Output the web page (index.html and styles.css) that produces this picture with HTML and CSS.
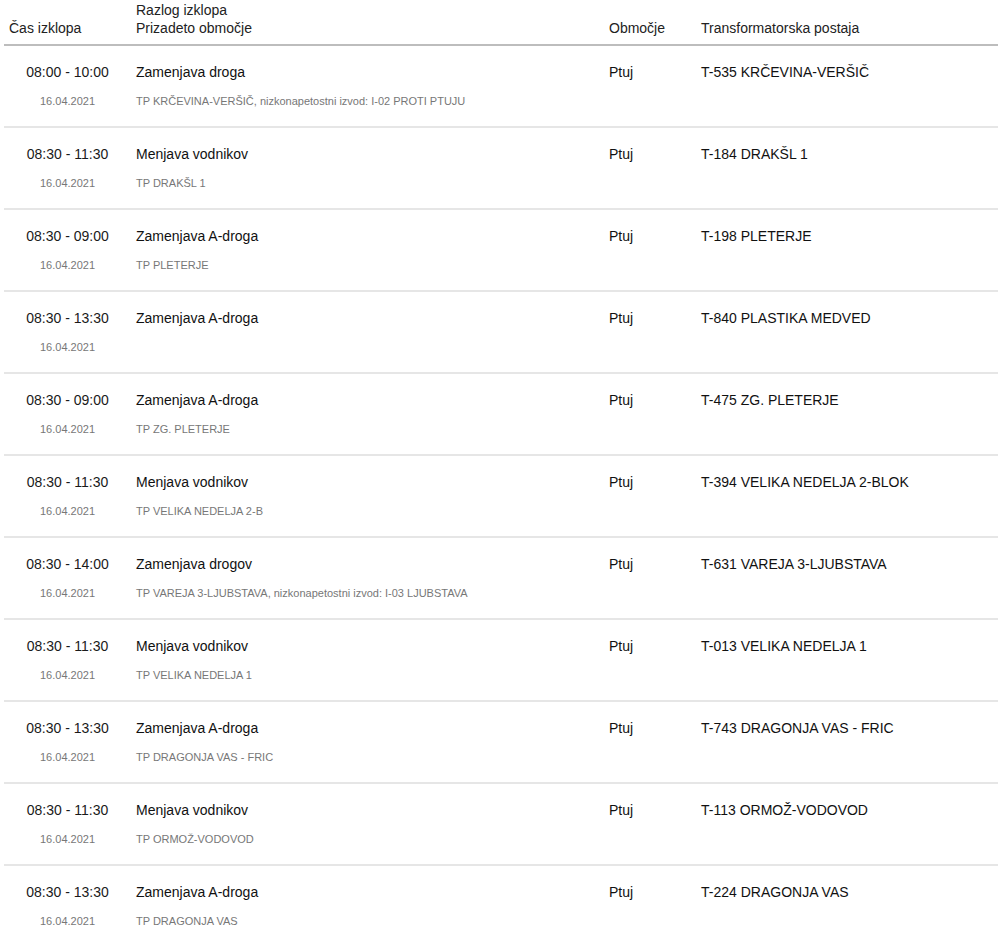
FILE: index.html
```html
<!DOCTYPE html>
<html lang="sl">
<head>
<meta charset="utf-8">
<title>Izklopi</title>
<link rel="stylesheet" href="styles.css">
</head>
<body>
<table class="outages">
  <colgroup>
    <col class="c-time"><col class="c-desc"><col class="c-area"><col class="c-ts">
  </colgroup>
  <thead>
    <tr>
      <th>Čas izklopa</th>
      <th>Razlog izklopa<br>Prizadeto območje</th>
      <th>Območje</th>
      <th>Transformatorska postaja</th>
    </tr>
  </thead>
  <tbody>
    <tr>
      <td class="time">08:00 - 10:00<div class="sub">16.04.2021</div></td>
      <td>Zamenjava droga<div class="sub">TP KRČEVINA-VERŠIČ, nizkonapetostni izvod: I-02 PROTI PTUJU</div></td>
      <td>Ptuj</td>
      <td>T-535 KRČEVINA-VERŠIČ</td>
    </tr>
    <tr>
      <td class="time">08:30 - 11:30<div class="sub">16.04.2021</div></td>
      <td>Menjava vodnikov<div class="sub">TP DRAKŠL 1</div></td>
      <td>Ptuj</td>
      <td>T-184 DRAKŠL 1</td>
    </tr>
    <tr>
      <td class="time">08:30 - 09:00<div class="sub">16.04.2021</div></td>
      <td>Zamenjava A-droga<div class="sub">TP PLETERJE</div></td>
      <td>Ptuj</td>
      <td>T-198 PLETERJE</td>
    </tr>
    <tr>
      <td class="time">08:30 - 13:30<div class="sub">16.04.2021</div></td>
      <td>Zamenjava A-droga</td>
      <td>Ptuj</td>
      <td>T-840 PLASTIKA MEDVED</td>
    </tr>
    <tr>
      <td class="time">08:30 - 09:00<div class="sub">16.04.2021</div></td>
      <td>Zamenjava A-droga<div class="sub">TP ZG. PLETERJE</div></td>
      <td>Ptuj</td>
      <td>T-475 ZG. PLETERJE</td>
    </tr>
    <tr>
      <td class="time">08:30 - 11:30<div class="sub">16.04.2021</div></td>
      <td>Menjava vodnikov<div class="sub">TP VELIKA NEDELJA 2-B</div></td>
      <td>Ptuj</td>
      <td>T-394 VELIKA NEDELJA 2-BLOK</td>
    </tr>
    <tr>
      <td class="time">08:30 - 14:00<div class="sub">16.04.2021</div></td>
      <td>Zamenjava drogov<div class="sub">TP VAREJA 3-LJUBSTAVA, nizkonapetostni izvod: I-03 LJUBSTAVA</div></td>
      <td>Ptuj</td>
      <td>T-631 VAREJA 3-LJUBSTAVA</td>
    </tr>
    <tr>
      <td class="time">08:30 - 11:30<div class="sub">16.04.2021</div></td>
      <td>Menjava vodnikov<div class="sub">TP VELIKA NEDELJA 1</div></td>
      <td>Ptuj</td>
      <td>T-013 VELIKA NEDELJA 1</td>
    </tr>
    <tr>
      <td class="time">08:30 - 13:30<div class="sub">16.04.2021</div></td>
      <td>Zamenjava A-droga<div class="sub">TP DRAGONJA VAS - FRIC</div></td>
      <td>Ptuj</td>
      <td>T-743 DRAGONJA VAS - FRIC</td>
    </tr>
    <tr>
      <td class="time">08:30 - 11:30<div class="sub">16.04.2021</div></td>
      <td>Menjava vodnikov<div class="sub">TP ORMOŽ-VODOVOD</div></td>
      <td>Ptuj</td>
      <td>T-113 ORMOŽ-VODOVOD</td>
    </tr>
    <tr>
      <td class="time">08:30 - 13:30<div class="sub">16.04.2021</div></td>
      <td>Zamenjava A-droga<div class="sub">TP DRAGONJA VAS</div></td>
      <td>Ptuj</td>
      <td>T-224 DRAGONJA VAS</td>
    </tr>
  </tbody>
</table>
</body>
</html>
```
FILE: styles.css
```css
html, body {
  margin: 0;
  padding: 0;
  background: #fff;
}
body {
  font-family: "Liberation Sans", Arial, sans-serif;
  font-size: 14px;
  color: #1a1a1a;
  padding: 0 6px 0 4px;
}
.outages {
  width: 994px;
  border-collapse: collapse;
  table-layout: fixed;
}
.c-time { width: 127px; }
.c-desc { width: 473px; }
.c-area { width: 92px; }
.c-ts { width: auto; }

.outages th {
  font-weight: normal;
  text-align: left;
  vertical-align: bottom;
  line-height: 18px;
  padding: 1px 5px 7px;
  color: #222;
  border-bottom: 2px solid #bdbdbd;
}
.outages td {
  vertical-align: top;
  text-align: left;
  line-height: 18px;
  padding: 17px 5px 0;
  height: 63px;
  border-bottom: 2px solid #e6e6e6;
  color: #111;
}
.outages td.time {
  text-align: center;
  color: #1a1a1a;
}
.sub {
  font-size: 11px;
  line-height: 14px;
  color: #777;
  margin-top: 13px;
}
```
